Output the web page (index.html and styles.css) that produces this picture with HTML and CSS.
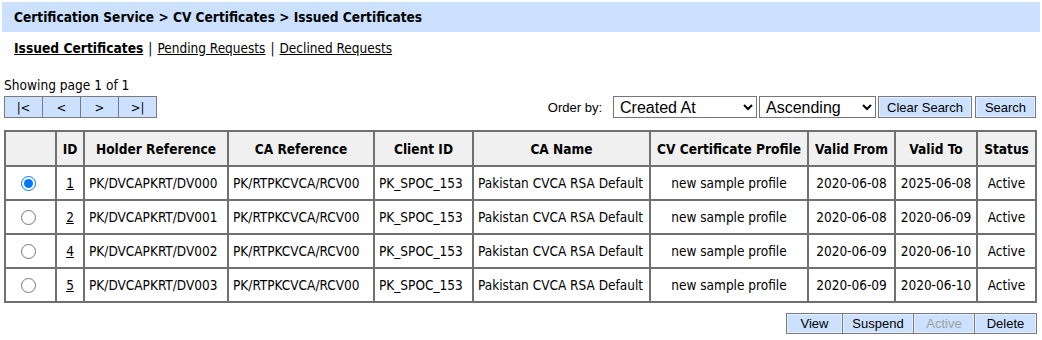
FILE: index.html
```html
<!DOCTYPE html>
<html>
<head>
<meta charset="utf-8">
<link rel="stylesheet" href="styles.css">
</head>
<body>
<div class="crumb">Certification Service &gt; CV Certificates &gt; Issued Certificates</div>
<div class="tabs"><a class="cur" href="#">Issued Certificates</a><span class="sep">|</span><a href="#">Pending Requests</a><span class="sep">|</span><a href="#">Declined Requests</a></div>
<div class="showing">Showing page 1 of 1</div>
<div class="toolbar">
  <div class="pager"><button class="pbtn">|&lt;</button><button class="pbtn">&lt;</button><button class="pbtn">&gt;</button><button class="pbtn">&gt;|</button></div>
  <div class="order">
    <span class="olabel">Order by:</span>
    <select class="sel sel1"><option>Created At</option></select>
    <select class="sel sel2"><option>Ascending</option></select>
    <button class="btn btn-clear">Clear Search</button>
    <button class="btn btn-search">Search</button>
  </div>
</div>
<table class="grid">
  <colgroup>
    <col class="c0"><col class="c1"><col class="c2"><col class="c3"><col class="c4"><col class="c5"><col class="c6"><col class="c7"><col class="c8"><col class="c9">
  </colgroup>
  <thead>
    <tr><th></th><th>ID</th><th>Holder Reference</th><th>CA Reference</th><th>Client ID</th><th>CA Name</th><th>CV Certificate Profile</th><th>Valid From</th><th>Valid To</th><th>Status</th></tr>
  </thead>
  <tbody>
    <tr><td class="ctr rad"><input type="radio" name="r" checked></td><td class="ctr"><a href="#">1</a></td><td>PK/DVCAPKRT/DV000</td><td>PK/RTPKCVCA/RCV00</td><td>PK_SPOC_153</td><td>Pakistan CVCA RSA Default</td><td class="ctr">new sample profile</td><td class="ctr">2020-06-08</td><td class="ctr">2025-06-08</td><td class="ctr">Active</td></tr>
    <tr><td class="ctr rad"><input type="radio" name="r"></td><td class="ctr"><a href="#">2</a></td><td>PK/DVCAPKRT/DV001</td><td>PK/RTPKCVCA/RCV00</td><td>PK_SPOC_153</td><td>Pakistan CVCA RSA Default</td><td class="ctr">new sample profile</td><td class="ctr">2020-06-08</td><td class="ctr">2020-06-09</td><td class="ctr">Active</td></tr>
    <tr><td class="ctr rad"><input type="radio" name="r"></td><td class="ctr"><a href="#">4</a></td><td>PK/DVCAPKRT/DV002</td><td>PK/RTPKCVCA/RCV00</td><td>PK_SPOC_153</td><td>Pakistan CVCA RSA Default</td><td class="ctr">new sample profile</td><td class="ctr">2020-06-09</td><td class="ctr">2020-06-10</td><td class="ctr">Active</td></tr>
    <tr><td class="ctr rad"><input type="radio" name="r"></td><td class="ctr"><a href="#">5</a></td><td>PK/DVCAPKRT/DV003</td><td>PK/RTPKCVCA/RCV00</td><td>PK_SPOC_153</td><td>Pakistan CVCA RSA Default</td><td class="ctr">new sample profile</td><td class="ctr">2020-06-09</td><td class="ctr">2020-06-10</td><td class="ctr">Active</td></tr>
  </tbody>
</table>
<div class="actions">
  <button class="abtn a-view">View</button><button class="abtn a-suspend">Suspend</button><button class="abtn a-active" disabled>Active</button><button class="abtn a-delete">Delete</button>
</div>
</body>
</html>
```
FILE: styles.css
```css
html, body { margin: 0; padding: 0; background: #fff; }
body {
  font-family: "DejaVu Sans Condensed", "DejaVu Sans", sans-serif;
  font-size: 14px;
  color: #000;
  width: 1042px;
  height: 340px;
  overflow: hidden;
}
.crumb {
  margin: 2px 2px 0 2px;
  height: 30px;
  line-height: 30px;
  background: #cce0ff;
  padding-left: 12px;
  font-weight: bold;
  font-size: 13.6px;
}
.tabs {
  margin: 7px 0 0 14px;
  height: 18px;
  line-height: 18px;
  font-size: 13.5px;
}
.tabs a { color: #000; text-decoration: underline; }
.tabs a.cur { font-weight: bold; font-size: 13.7px; }
.tabs .sep { margin: 0 5px; color: #000; }
.showing {
  margin: 20px 0 0 4px;
  height: 16px;
  line-height: 16px;
  font-size: 13.6px;
}
.toolbar {
  display: flex;
  justify-content: space-between;
  align-items: flex-end;
  margin: 3px 6px 0 4px;
}
.pager { display: flex; }
.pbtn {
  width: 39px;
  height: 22px;
  margin: 0 -1px 0 0;
  padding: 0;
  background: #cce0ff;
  border: 1px solid #7a7a7a;
  font-family: "DejaVu Sans Condensed", "DejaVu Sans", sans-serif;
  font-size: 13px;
  color: #000;
}
.order { display: flex; align-items: center; }
.olabel {
  font-family: "Liberation Sans", Arial, sans-serif;
  font-size: 13px;
  margin-right: 11px;
}
.sel {
  height: 22px;
  font-family: "Liberation Sans", Arial, sans-serif;
  font-size: 16px;
  border: 1px solid #767676;
  border-radius: 0;
  background: #fff;
  color: #000;
  padding: 0 2px;
}
.sel1 { width: 144px; }
.sel2 { width: 117px; margin-left: 2px; }
.btn, .abtn {
  height: 22px;
  margin: 0;
  padding: 0;
  background: #cce0ff;
  border: 1px solid #7a7a7a;
  font-family: "Liberation Sans", Arial, sans-serif;
  font-size: 13px;
  color: #000;
  box-shadow: inset 0 0 0 1px #e6efff;
}
.btn-clear { width: 94px; margin-left: 2px; }
.btn-search { width: 61px; margin-left: 3px; }
.grid {
  margin: 12px 0 0 4px;
  width: 1033px;
  table-layout: fixed;
  border-collapse: collapse;
  border: 2px solid #8a8a8a;
  font-size: 13.5px;
}
.grid th, .grid td {
  border: 2px solid #707070;
  padding: 0 4px;
  white-space: nowrap;
  overflow: hidden;
}
.grid th {
  height: 33px;
  background: #f0f0f0;
  font-weight: bold;
  font-size: 13.6px;
  text-align: center;
}
.grid td { height: 32px; }
.grid td.ctr { text-align: center; }
.grid td.rad { padding: 0 8px 0 4px; }
.grid a { color: #000; text-decoration: underline; }
.grid input[type=radio] { width: 15px; height: 15px; margin: 0; vertical-align: middle; }
.c0 { width: 51px; }
.c1 { width: 28px; }
.c2 { width: 144px; }
.c3 { width: 146px; }
.c4 { width: 99px; }
.c5 { width: 177px; }
.c6 { width: 158px; }
.c7 { width: 87px; }
.c8 { width: 82px; }
.c9 { width: 59px; }
.actions {
  display: flex;
  justify-content: flex-end;
  margin: 10px 5px 0 0;
}
.abtn { margin-left: -1px; height: 21px; }
.a-view { width: 57px; }
.a-suspend { width: 72px; }
.a-active { width: 62px; }
.a-delete { width: 63px; }
.abtn:disabled { color: #a0a0a0; }
```
